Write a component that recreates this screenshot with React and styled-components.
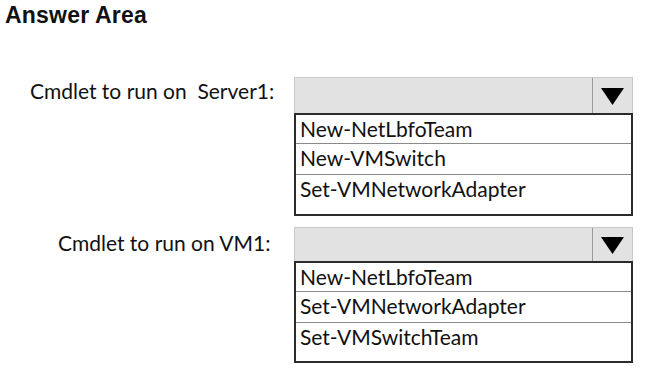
import React from "react";
import styled, { createGlobalStyle } from "styled-components";

const Global = createGlobalStyle`
  html, body { margin: 0; padding: 0; background: #fff; }
  body { width: 652px; height: 391px; overflow: hidden; }
`;

const Page = styled.div`
  width: 652px;
  height: 391px;
  background: #fff;
  padding: 3px 0 0 5px;
  box-sizing: border-box;
`;

const Title = styled.h1`
  margin: 0;
  font-family: "Liberation Sans", Arial, sans-serif;
  font-weight: bold;
  font-size: 23px;
  letter-spacing: 0.2px;
  line-height: 24px;
  color: #111;
`;

const Rows = styled.div`
  display: flex;
  flex-direction: column;
  gap: 11px;
  margin-top: 50px;
`;

const Row = styled.div`
  display: grid;
  grid-template-columns: 289px 339px;
  align-items: start;
`;

const Label = styled.div`
  font-family: Lato, "Open Sans", sans-serif;
  font-size: 21px;
  color: #111;
  padding-left: ${(p) => p.$indent}px;
  padding-top: ${(p) => p.$top}px;
  white-space: pre;
  line-height: 22px;
`;

const Dropdown = styled.div`
  display: flex;
  flex-direction: column;
`;

const Header = styled.div`
  display: flex;
  height: ${(p) => p.$h}px;
  box-sizing: border-box;
  background: #e2e2e2;
  border: 1px solid #c9c9c9;
  border-bottom: none;
`;

const HeaderField = styled.div`
  flex: 1;
  border-right: 1px solid #9a9a9a;
`;

const ArrowCell = styled.div`
  width: 39px;
  display: flex;
  align-items: center;
  justify-content: center;
  padding-top: 2px;
  box-sizing: border-box;
`;

const List = styled.div`
  border: 2px solid #2b2b2b;
  display: flex;
  flex-direction: column;
  height: ${(p) => p.$h}px;
  box-sizing: border-box;
`;

const Option = styled.div`
  height: ${(p) => (p.$first ? 29 : 31)}px;
  box-sizing: border-box;
  border-bottom: 1px solid #8a8a8a;
  font-family: Lato, "Open Sans", sans-serif;
  font-size: 21px;
  color: #111;
  padding-left: 4px;
  line-height: 27px;
  &:last-child { border-bottom: none; }
`;

const Arrow = () => (
  <svg width="23" height="17" viewBox="0 0 23 17">
    <polygon points="0,0 23,0 11.5,17" fill="#000" />
  </svg>
);

const Select = ({ headerH, listH, options }) => (
  <Dropdown>
    <Header $h={headerH}>
      <HeaderField />
      <ArrowCell>
        <Arrow />
      </ArrowCell>
    </Header>
    <List $h={listH}>
      {options.map((o, i) => (
        <Option key={o} $first={i === 0}>{o}</Option>
      ))}
    </List>
  </Dropdown>
);

export default function App() {
  return (
    <Page>
      <Global />
      <Title>Answer Area</Title>
      <Rows>
        <Row>
          <Label $indent={25} $top={3}>{"Cmdlet to run on  Server1:"}</Label>
          <Select
            headerH={36}
            listH={103}
            options={["New-NetLbfoTeam", "New-VMSwitch", "Set-VMNetworkAdapter"]}
          />
        </Row>
        <Row>
          <Label $indent={53} $top={5}>{"Cmdlet to run on VM1:"}</Label>
          <Select
            headerH={34}
            listH={102}
            options={["New-NetLbfoTeam", "Set-VMNetworkAdapter", "Set-VMSwitchTeam"]}
          />
        </Row>
      </Rows>
    </Page>
  );
}
